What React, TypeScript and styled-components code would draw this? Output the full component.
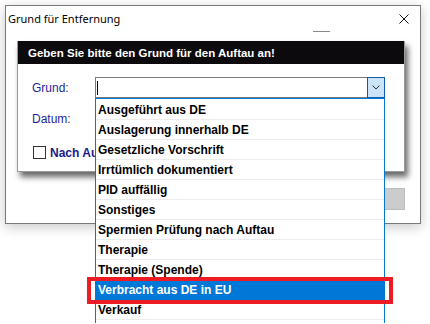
import styled, { createGlobalStyle } from 'styled-components';

const GlobalStyle = createGlobalStyle`
  html, body {
    margin: 0;
    padding: 0;
    background: #fff;
  }
  body {
    font-family: "Liberation Sans", Arial, sans-serif;
  }
`;

const Desktop = styled.div`
  width: 430px;
  height: 324px;
  overflow: hidden;
  padding: 5px 0 0 5px;
  box-sizing: border-box;
`;

const Window = styled.div`
  width: 416px;
  height: 219px;
  box-sizing: border-box;
  border: 1px solid #7a7a7a;
  background: #fff;
  box-shadow: 0 3px 12px rgba(0, 0, 0, 0.22);
  display: flex;
  flex-direction: column;
`;

const TitleBar = styled.div`
  height: 25px;
  display: flex;
  align-items: center;
  justify-content: space-between;
  padding: 0 11px 0 2px;
  font-family: "Segoe UI", "Noto Sans", sans-serif;
  font-size: 11px;
  color: #000;
`;

const Strip = styled.div`
  height: 10px;
`;

const StripLine = styled.div`
  margin-left: 307px;
  width: 17px;
  height: 1px;
  background: #8a8a8a;
`;

const Dialog = styled.div`
  margin-left: 11px;
  width: 386px;
  border: 1px solid #9a9a9a;
  border-top: none;
  background: #fff;
  box-shadow: 3px 5px 6px rgba(0, 0, 0, 0.6);
`;

const DialogHeader = styled.div`
  height: 23px;
  background: #0c0a0c;
  color: #fff;
  font-weight: bold;
  font-size: 11.5px;
  display: flex;
  align-items: center;
  padding-left: 10px;
`;

const DialogBody = styled.div`
  height: 107px;
  box-sizing: border-box;
  padding: 13px 0 0 14px;
  display: flex;
  flex-direction: column;
`;

const FormRow = styled.div<{ $gap?: number }>`
  height: 21px;
  display: flex;
  align-items: center;
  margin-top: ${p => p.$gap ?? 0}px;
`;

const Label = styled.span`
  width: 63px;
  font-size: 12px;
  color: #1f1f9a;
`;

const Combo = styled.div`
  position: relative;
  width: 290px;
  height: 21px;
  display: flex;
`;

const Field = styled.div`
  flex: 1;
  box-sizing: border-box;
  border: 1px solid #7a7a7a;
  border-right: none;
  display: flex;
  align-items: center;
`;

const Caret = styled.div`
  margin-left: 1px;
  width: 1px;
  height: 14px;
  background: #000;
`;

const DropButton = styled.div`
  width: 18px;
  box-sizing: border-box;
  border: 1px solid #0a5ea8;
  background: #cce4f7;
  display: flex;
  align-items: center;
  justify-content: center;
`;

const List = styled.div`
  position: absolute;
  top: 21px;
  left: 0;
  width: 290px;
  height: 225px;
  box-sizing: border-box;
  border: 1px solid #0078d7;
  border-bottom: none;
  padding-top: 1px;
  background: #fff;
  z-index: 5;
`;

const Item = styled.div<{ $selected?: boolean }>`
  height: 20px;
  box-sizing: border-box;
  border-bottom: 1px solid ${p => (p.$selected ? '#0078d7' : '#ececec')};
  padding-left: 2px;
  display: flex;
  align-items: center;
  font-size: 12px;
  font-weight: bold;
  color: ${p => (p.$selected ? '#fff' : '#000')};
  background: ${p => (p.$selected ? '#0078d7' : 'transparent')};
  white-space: nowrap;
`;

const Marker = styled.div`
  position: absolute;
  left: -9px;
  top: 178px;
  width: 306px;
  height: 27px;
  box-sizing: border-box;
  border: 4px solid #ed1c24;
  pointer-events: none;
`;

const Check = styled.div`
  width: 13px;
  height: 13px;
  box-sizing: border-box;
  border: 1px solid #333;
  background: #fff;
  margin: 0 4px 0 1px;
`;

const CheckLabel = styled.span`
  max-width: 45px;
  overflow: hidden;
  white-space: nowrap;
  font-size: 12px;
  font-weight: bold;
  color: #1a1a8c;
`;

const Footer = styled.div`
  display: flex;
  justify-content: flex-end;
  padding: 16px 15px 0 0;
`;

const GrayButton = styled.div`
  width: 75px;
  height: 22px;
  box-sizing: border-box;
  background: #cccccc;
  border: 1px solid #bdbdbd;
`;

const reasons = [
  'Ausgeführt aus DE',
  'Auslagerung innerhalb DE',
  'Gesetzliche Vorschrift',
  'Irrtümlich dokumentiert',
  'PID auffällig',
  'Sonstiges',
  'Spermien Prüfung nach Auftau',
  'Therapie',
  'Therapie (Spende)',
  'Verbracht aus DE in EU',
  'Verkauf',
];

export default function App() {
  return (
    <>
      <GlobalStyle />
      <Desktop>
        <Window>
          <TitleBar>
            <span>Grund für Entfernung</span>
            <svg width="10" height="10" viewBox="0 0 10 10">
              <path d="M0.5 0.5 L9.5 9.5 M9.5 0.5 L0.5 9.5" stroke="#111" strokeWidth="1" />
            </svg>
          </TitleBar>
          <Strip>
            <StripLine />
          </Strip>
          <Dialog>
            <DialogHeader>Geben Sie bitte den Grund für den Auftau an!</DialogHeader>
            <DialogBody>
              <FormRow>
                <Label>Grund:</Label>
                <Combo>
                  <Field>
                    <Caret />
                  </Field>
                  <DropButton>
                    <svg width="8" height="5" viewBox="0 0 8 5">
                      <path d="M0.5 0.5 L4 4 L7.5 0.5" fill="none" stroke="#333" strokeWidth="1" />
                    </svg>
                  </DropButton>
                  <List>
                    {reasons.map((r, i) => (
                      <Item key={r} $selected={i === 9}>
                        {r}
                      </Item>
                    ))}
                    <Marker />
                  </List>
                </Combo>
              </FormRow>
              <FormRow $gap={10}>
                <Label>Datum:</Label>
              </FormRow>
              <FormRow $gap={13}>
                <Check />
                <CheckLabel>Nach Auftau</CheckLabel>
              </FormRow>
            </DialogBody>
          </Dialog>
          <Footer>
            <GrayButton />
          </Footer>
        </Window>
      </Desktop>
    </>
  );
}
